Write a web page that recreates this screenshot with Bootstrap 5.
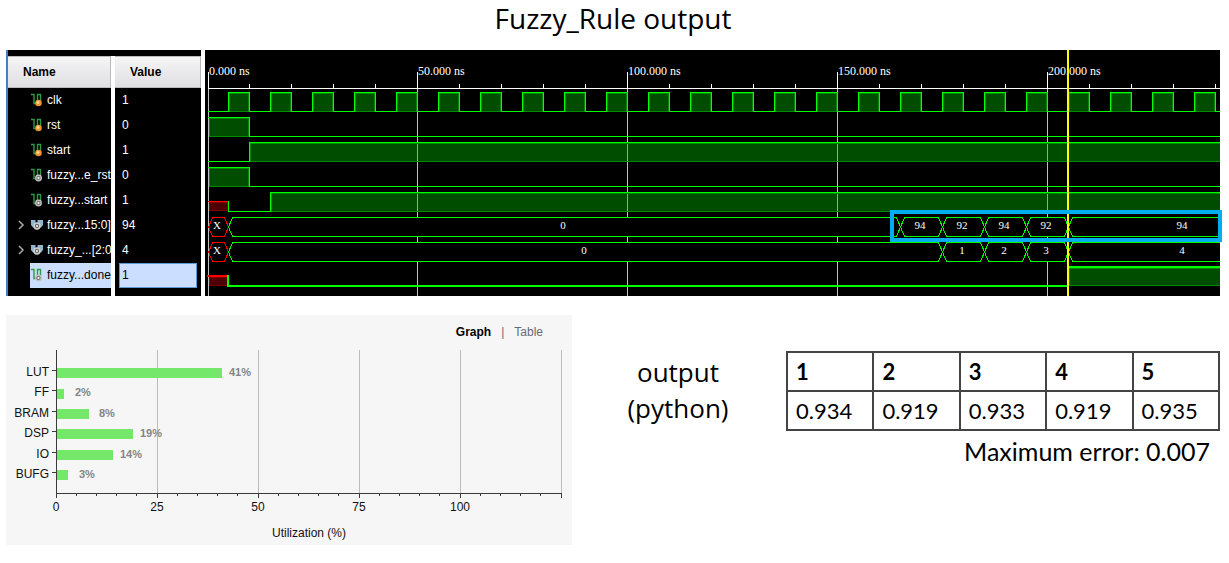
<!DOCTYPE html>
<html lang="en">
<head>
<meta charset="utf-8">
<meta name="viewport" content="width=device-width, initial-scale=1">
<title>Fuzzy_Rule output</title>
<link href="https://cdn.jsdelivr.net/npm/bootstrap@5.3.0/dist/css/bootstrap.min.css" rel="stylesheet">
<style>
  body { font-family: "Liberation Sans", Arial, sans-serif; font-size: 12px; color: #000; background: #fff; }
  .slide { padding: 0 9px 16px 6px; }
  .slide-font { font-family: "Open Sans", sans-serif; }
  .result-font { font-family: Lato, Carlito, sans-serif; }
  .slide-title { font-size: 28px; line-height: 36px; height: 50px; }

  /* signal list */
  .signals { flex: 0 0 195px; background: #000; border-left: 2px solid #4a7cc8; padding-top: 6px; }
  .signal-table { width: 100%; height: 240px; table-layout: fixed; border-collapse: separate; border-spacing: 0; color: #fff; }
  .signal-table .name-col { width: 103px; }
  .signal-table .split-col { width: 4px; }
  .signal-table th { height: 32px; padding: 0 0 0 15px; color: #000; line-height: 16px;
    background: linear-gradient(#f5f5f6, #dfdfe3); border: 1px solid #b9b9b9; border-left-width: 0; }
  .signal-table td { height: 25px; padding: 0; line-height: 24px; white-space: nowrap; overflow: hidden; }
  .signal-table .splitter { background: #fff; border: 0; padding: 0; }
  .signal-table .rest td { height: 8px; line-height: 8px; }
  .sig { height: 25px; margin-left: 22px; padding: 0 0 2px 1px; gap: 3px; }
  .sig svg { flex: none; }
  .sig-bus { margin-left: 8px; padding-left: 0; }
  .sig-bus button { width: 12px; height: 14px; }
  .sig-value { height: 25px; padding-left: 7px; }
  .sig-on { background: #ccdeff; color: #000; }
  .sig-value.sig-on { margin: 0 4px; padding-left: 2px; line-height: 23px; border: 1px solid #5a9bd5; }

  /* waveform */
  .wave { min-width: 0; height: 246px; margin-left: 4px; background: #000; }
  .wave text { font-family: "Liberation Serif", serif; font-size: 11px; fill: #fff; }
  .wave .times text { font-size: 12px; }
  .wave .mid { text-anchor: middle; }
  .hi { fill: #00c000; fill-opacity: .4; }
  .lit { stroke: #0f0; fill: none; }
  .dim { stroke: #008a00; fill: none; }
  .bad { stroke: #f00; fill: none; }
  .bus-cell { fill: #000; }
  .callout { left: 685px; right: -2px; top: 160px; height: 32px; border: 4px solid #00adef; pointer-events: none; }

  /* lower part */
  .lower { display: grid; grid-template-columns: 566fr 214fr 434fr; margin-top: 19px; }
  .util { background: #f6f6f6; }
  .util-tabs { height: 32px; padding: 2px 29px 0 0; gap: 10px; color: #666b73; }
  .util-tabs button { color: inherit; line-height: 16px; }
  .util-tabs .current { color: #000; font-weight: bold; }
  .util text { font-size: 12px; fill: #111; }
  .util .pct text { font-size: 11px; font-weight: bold; fill: #858585; }
  .util .end { text-anchor: end; }
  .util .mid { text-anchor: middle; }
  .caption-box { font-size: 26px; line-height: 36px; padding: 39px 0 0; }
  .caption-box { padding-right: 2px; }
  .result-box { padding-top: 36px; }
  .result-table { width: 100%; table-layout: fixed; border-collapse: collapse; font-size: 22px; line-height: 37px; }
  .result-table th, .result-table td { border: 2px solid #444; padding: 0 0 0 8px; }
  .max-error { font-size: 25px; line-height: 36px; padding: 2px 10px 0 0; }
</style>
</head>
<body>
<svg class="d-none" aria-hidden="true">
  <symbol id="ic-in" viewBox="1 0 13 14">
    <path d="M1 1.500h3v9h2M7.500 10V1.500h3V8" fill="none" stroke="#2f9a45" stroke-width="1.400"/>
    <circle cx="8.500" cy="10" r="3.300" fill="#f0922b"/><circle cx="8" cy="9.500" r="1.400" fill="#ffd9a0"/>
  </symbol>
  <symbol id="ic-net" viewBox="1 0 13 14">
    <path d="M1 1.500h3v9h2M7.500 10V1.500h3V8" fill="none" stroke="#2f9a45" stroke-width="1.400"/>
    <circle cx="8.500" cy="10" r="2.800" fill="#777" stroke="#c4c4c4" stroke-width="1.300"/><circle cx="8.500" cy="10" r="1" fill="#fff"/>
  </symbol>
  <symbol id="ic-bus" viewBox="1 0 13 14">
    <path d="M1 2h4.500v3h2V2H13v5l-2 2.500H3L1 7z" fill="#8fb6cc"/>
    <circle cx="7" cy="8" r="2.900" fill="#666" stroke="#d0d0d0" stroke-width="1.500"/><circle cx="7" cy="8" r="1" fill="#fff"/>
  </symbol>
  <symbol id="ic-more" viewBox="0 0 12 14"><path d="M3 3l4 4-4 4" fill="none" stroke="#aaa" stroke-width="1.500"/></symbol>
</svg>

<main class="slide">
  <h1 class="slide-title slide-font text-center fw-normal mb-0">Fuzzy_Rule output</h1>

  <section class="d-flex">
    <div class="signals">
      <table class="signal-table">
        <colgroup><col class="name-col"><col class="split-col"><col></colgroup>
        <thead><tr><th scope="col">Name</th><td class="splitter"></td><th scope="col">Value</th></tr></thead>
        <tbody>
          <tr><td><div class="sig d-flex align-items-center"><svg width="13" height="14"><use href="#ic-in"/></svg>clk</div></td><td class="splitter"></td><td><div class="sig-value">1</div></td></tr>
          <tr><td><div class="sig d-flex align-items-center"><svg width="13" height="14"><use href="#ic-in"/></svg>rst</div></td><td class="splitter"></td><td><div class="sig-value">0</div></td></tr>
          <tr><td><div class="sig d-flex align-items-center"><svg width="13" height="14"><use href="#ic-in"/></svg>start</div></td><td class="splitter"></td><td><div class="sig-value">1</div></td></tr>
          <tr><td><div class="sig d-flex align-items-center"><svg width="13" height="14"><use href="#ic-net"/></svg>fuzzy...e_rst</div></td><td class="splitter"></td><td><div class="sig-value">0</div></td></tr>
          <tr><td><div class="sig d-flex align-items-center"><svg width="13" height="14"><use href="#ic-net"/></svg>fuzzy...start</div></td><td class="splitter"></td><td><div class="sig-value">1</div></td></tr>
          <tr><td><div class="sig sig-bus d-flex align-items-center"><button type="button" class="btn p-0 border-0 d-flex" aria-label="Expand bus"><svg width="12" height="14"><use href="#ic-more"/></svg></button><svg width="13" height="14"><use href="#ic-bus"/></svg>fuzzy...15:0]</div></td><td class="splitter"></td><td><div class="sig-value">94</div></td></tr>
          <tr><td><div class="sig sig-bus d-flex align-items-center"><button type="button" class="btn p-0 border-0 d-flex" aria-label="Expand bus"><svg width="12" height="14"><use href="#ic-more"/></svg></button><svg width="13" height="14"><use href="#ic-bus"/></svg>fuzzy_...[2:0</div></td><td class="splitter"></td><td><div class="sig-value">4</div></td></tr>
          <tr><td><div class="sig sig-on d-flex align-items-center"><svg width="13" height="14"><use href="#ic-net"/></svg>fuzzy...done</div></td><td class="splitter"></td><td><div class="sig-value sig-on">1</div></td></tr>
          <tr class="rest"><td></td><td class="splitter"></td><td></td></tr>
        </tbody>
      </table>
    </div>

    <div class="wave flex-grow-1 position-relative">
      <svg class="d-block w-100" height="246" shape-rendering="crispEdges" role="img" aria-label="Simulation waveform">
        <defs>
          <pattern id="ticks" x="2" y="34" width="42" height="4" patternUnits="userSpaceOnUse"><rect width="1" height="4" fill="#fff"/></pattern>
          <!-- one clock period: low for half, high for half -->
          <pattern id="clock" x="2" y="42" width="42" height="20" patternUnits="userSpaceOnUse">
            <rect class="hi" x="22" y="1" width="20" height="19"/>
            <path class="dim" d="M22.500 1v18M41.500 1v18M22 1.500h20M22 19.500h20"/>
            <path class="lit" d="M.5 0v20M0 19.500h22M21.500 0v20M21 .5h21"/>
          </pattern>
        </defs>
        <!-- time grid -->
        <path d="M3.500 38v208M212.500 38v208M422.500 38v208M632.500 38v208M842.500 38v208" stroke="#c0c0c0"/>
        <path d="M3.500 22v16M212.500 22v16M422.500 22v16M632.500 22v16M842.500 22v16M3 38.500h3000" stroke="#fff"/>
        <rect x="4" y="34" width="3000" height="4" fill="url(#ticks)"/>
        <g class="times"><text x="4" y="25">0.000 ns</text><text x="213" y="25">50.000 ns</text><text x="423" y="25">100.000 ns</text><text x="633" y="25">150.000 ns</text><text x="843" y="25">200.000 ns</text></g>
        <!-- clk -->
        <rect x="3" y="42" width="3000" height="20" fill="url(#clock)"/>
        <!-- rst -->
        <rect class="hi" x="4" y="68" width="40" height="19"/>
        <path class="dim" d="M4 68.500h40M4.500 68v18M43.500 68v18M4 86.500h40"/>
        <path class="lit" d="M3 67.500h41.500v19H3000"/>
        <!-- start -->
        <rect class="hi" x="45" y="93" width="3000" height="19"/>
        <path class="dim" d="M45 93.500h3000M45.500 93v18M45 111.500h3000"/>
        <path class="lit" d="M3 111.500h41.500v-19H3000"/>
        <!-- e_rst -->
        <rect class="hi" x="4" y="118" width="40" height="19"/>
        <path class="dim" d="M4 118.500h40M4.500 118v18M43.500 118v18M4 136.500h40"/>
        <path class="lit" d="M3 117.500h41.500v19H3000"/>
        <!-- start net -->
        <rect x="4" y="152" width="19" height="9" fill="#4c0000"/>
        <path d="M4 152.500h18.500v8.500M4.500 152v9M4 160.500h19" stroke="#800000" fill="none"/>
        <path class="bad" d="M3 151.500h20"/>
        <rect class="hi" x="66" y="143" width="3000" height="19"/>
        <path class="dim" d="M66 143.500h3000M66.500 143v18M66 161.500h3000"/>
        <path class="lit" d="M23.500 151v10.500h42v-19H3000"/>
        <!-- 16 bit bus -->
        <path class="bad bus-cell" d="M3.500 177l4-9.500h12l4 9.500-4 9.500h-12z"/>
        <path class="lit bus-cell" d="M23.500 177l4-9.500h664l4 9.500-4 9.500h-664zM695.500 177l4-9.500h34l4 9.500-4 9.500h-34zM737.500 177l4-9.500h34l4 9.500-4 9.500h-34zM779.500 177l4-9.500h34l4 9.500-4 9.500h-34zM821.500 177l4-9.500h34l4 9.500-4 9.500h-34zM863.500 177l4-9.500H3000v19H867.500z"/>
        <text class="mid" x="12" y="179">X</text><text class="mid" x="358" y="179">0</text>
        <text class="mid" x="715" y="179">94</text><text class="mid" x="757" y="179">92</text><text class="mid" x="799" y="179">94</text><text class="mid" x="841" y="179">92</text><text class="mid" x="977" y="179">94</text>
        <!-- 3 bit bus -->
        <path class="bad bus-cell" d="M3.500 202l4-9.500h12l4 9.500-4 9.500h-12z"/>
        <path class="lit bus-cell" d="M23.500 202l4-9.500h706l4 9.500-4 9.500h-706zM737.500 202l4-9.500h34l4 9.500-4 9.500h-34zM779.500 202l4-9.500h34l4 9.500-4 9.500h-34zM821.500 202l4-9.500h34l4 9.500-4 9.500h-34zM863.500 202l4-9.500H3000v19H867.500z"/>
        <text class="mid" x="12" y="204">X</text><text class="mid" x="379" y="204">0</text>
        <text class="mid" x="757" y="204">1</text><text class="mid" x="799" y="204">2</text><text class="mid" x="841" y="204">3</text><text class="mid" x="977" y="204">4</text>
        <!-- done -->
        <rect x="4" y="227" width="18" height="9" fill="#4c0000"/>
        <path d="M4 227.500h18M4.500 227v8M4 235.500h18" stroke="#800000" fill="none"/>
        <path class="bad" d="M2 226h21" stroke-width="2"/>
        <rect class="hi" x="864" y="218" width="3000" height="18"/>
        <path class="dim" d="M864 218.500h3000M864.500 218v18M864 235.500h3000"/>
        <path class="lit" stroke-width="2" d="M23 225v11h840v-19H3000"/>
        <!-- cursor -->
        <path d="M863 0v246" stroke="#ff0" stroke-width="2"/>
      </svg>
      <div class="callout position-absolute"></div>
    </div>
  </section>

  <section class="lower">
    <div class="util">
      <div class="util-tabs d-flex justify-content-end align-items-center">
        <button type="button" class="current bg-transparent border-0 p-0">Graph</button><span>|</span><button type="button" class="bg-transparent border-0 p-0">Table</button>
      </div>
      <svg class="d-block w-100" viewBox="0 32 566 198" role="img" aria-label="Utilization by resource">
        <path d="M151.500 35v143M252.500 35v143M353.500 35v143M454.500 35v143M555.500 35v143" stroke="#bcbcbc"/>
        <g fill="#75e86b">
          <rect x="51" y="53" width="165" height="10"/><rect x="51" y="74" width="7" height="10"/><rect x="51" y="94" width="32" height="10"/>
          <rect x="51" y="114" width="76" height="10"/><rect x="51" y="135" width="56" height="10"/><rect x="51" y="155" width="11" height="10"/>
        </g>
        <path stroke="#3c3c3c" fill="none" d="M50.500 35v148M50 178.500h506M46 55.500h4M46 75.500h4M46 96.500h4M46 116.500h4M46 137.500h4M46 157.500h4
          M151.500 178v5M252.500 178v5M353.500 178v5M454.500 178v5M555.500 178v5
          M70.500 178v3M90.500 178v3M110.500 178v3M130.500 178v3M171.500 178v3M191.500 178v3M211.500 178v3M231.500 178v3M272.500 178v3M292.500 178v3M312.500 178v3M332.500 178v3M373.500 178v3M393.500 178v3M413.500 178v3M433.500 178v3M474.500 178v3M494.500 178v3M514.500 178v3M534.500 178v3"/>
        <g class="end"><text x="43" y="61">LUT</text><text x="43" y="81">FF</text><text x="43" y="102">BRAM</text><text x="43" y="122">DSP</text><text x="43" y="143">IO</text><text x="43" y="163">BUFG</text></g>
        <g class="pct"><text x="223" y="61">41%</text><text x="69" y="81">2%</text><text x="93" y="102">8%</text><text x="134" y="122">19%</text><text x="114" y="143">14%</text><text x="73" y="163">3%</text></g>
        <g class="mid"><text x="50" y="196">0</text><text x="151" y="196">25</text><text x="252" y="196">50</text><text x="353" y="196">75</text><text x="454" y="196">100</text><text x="303" y="222">Utilization (%)</text></g>
      </svg>
    </div>
    <div class="caption-box slide-font text-center">output<br>(python)</div>
    <div class="result-box result-font">
      <table class="result-table">
        <thead><tr><th scope="col">1</th><th scope="col">2</th><th scope="col">3</th><th scope="col">4</th><th scope="col">5</th></tr></thead>
        <tbody><tr><td>0.934</td><td>0.919</td><td>0.933</td><td>0.919</td><td>0.935</td></tr></tbody>
      </table>
      <p class="max-error text-end mb-0">Maximum error: 0.007</p>
    </div>
  </section>
</main>
<script src="https://cdn.jsdelivr.net/npm/bootstrap@5.3.0/dist/js/bootstrap.bundle.min.js"></script>
</body>
</html>
